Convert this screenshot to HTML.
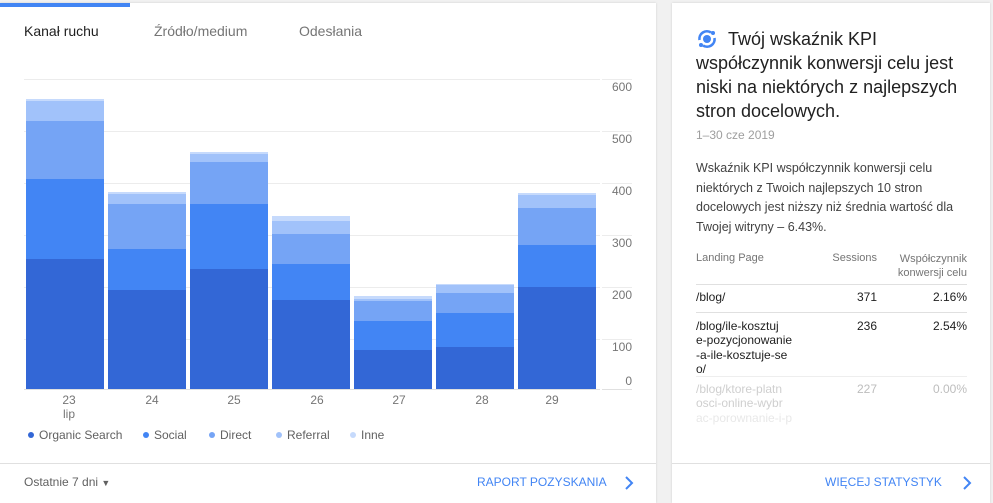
<!DOCTYPE html>
<html><head><meta charset="utf-8"><style>
*{margin:0;padding:0;box-sizing:border-box}
body{width:993px;height:503px;background:#f1f1f1;font-family:"Liberation Sans",sans-serif;position:relative;overflow:hidden}
.card{position:absolute;background:#fff;box-shadow:0 0 2px rgba(0,0,0,.15)}
.a{position:absolute;white-space:nowrap}
.bar{position:absolute;width:78px}
.g{position:absolute;height:1px;background:#ececec}
.yl{position:absolute;left:602px;width:30px;text-align:right;font-size:12px;color:#757575}
.xl{position:absolute;width:40px;text-align:center;font-size:12px;color:#757575;top:393px;line-height:14px}
.lg{position:absolute;top:428px;font-size:12px;color:#616161}
.lg i{display:inline-block;width:6px;height:6px;border-radius:50%;margin-right:5px;vertical-align:1px}
</style></head><body>
<div class="card" style="left:0;top:3px;width:656px;height:500px"></div>
<div class="a" style="left:0;top:3px;width:130px;height:4px;background:#4285f4"></div>
<div class="a" style="left:24px;top:23px;font-size:14px;color:#212121">Kanał ruchu</div>
<div class="a" style="left:154px;top:23px;font-size:14px;color:#757575">Źródło/medium</div>
<div class="a" style="left:299px;top:23px;font-size:14px;color:#757575">Odesłania</div>

<div class="g" style="left:24px;width:576px;top:79px"></div><div class="g" style="left:602px;width:30px;top:79px"></div>
<div class="g" style="left:24px;width:576px;top:131px"></div><div class="g" style="left:602px;width:30px;top:131px"></div>
<div class="g" style="left:24px;width:576px;top:183px"></div><div class="g" style="left:602px;width:30px;top:183px"></div>
<div class="g" style="left:24px;width:576px;top:235px"></div><div class="g" style="left:602px;width:30px;top:235px"></div>
<div class="g" style="left:24px;width:576px;top:287px"></div><div class="g" style="left:602px;width:30px;top:287px"></div>
<div class="g" style="left:24px;width:576px;top:339px"></div><div class="g" style="left:602px;width:30px;top:339px"></div>
<div class="g" style="left:24px;width:576px;top:389px;background:#e0e0e0"></div><div class="g" style="left:602px;width:30px;top:389px;background:#e0e0e0"></div>
<div class="yl" style="top:80px">600</div><div class="yl" style="top:132px">500</div><div class="yl" style="top:184px">400</div><div class="yl" style="top:236px">300</div><div class="yl" style="top:288px">200</div><div class="yl" style="top:340px">100</div><div class="yl" style="top:374px">0</div>

<div class="bar" style="left:26px;top:99px;height:2px;background:#c6dafc"></div><div class="bar" style="left:26px;top:101px;height:20px;background:#a1c2fa"></div><div class="bar" style="left:26px;top:121px;height:58px;background:#75a4f5"></div><div class="bar" style="left:26px;top:179px;height:80px;background:#4285f4"></div><div class="bar" style="left:26px;top:259px;height:130px;background:#3367d6"></div>
<div class="bar" style="left:108px;top:192px;height:2px;background:#c6dafc"></div><div class="bar" style="left:108px;top:194px;height:10px;background:#a1c2fa"></div><div class="bar" style="left:108px;top:204px;height:45px;background:#75a4f5"></div><div class="bar" style="left:108px;top:249px;height:41px;background:#4285f4"></div><div class="bar" style="left:108px;top:290px;height:99px;background:#3367d6"></div>
<div class="bar" style="left:190px;top:152px;height:2px;background:#c6dafc"></div><div class="bar" style="left:190px;top:154px;height:8px;background:#a1c2fa"></div><div class="bar" style="left:190px;top:162px;height:42px;background:#75a4f5"></div><div class="bar" style="left:190px;top:204px;height:65px;background:#4285f4"></div><div class="bar" style="left:190px;top:269px;height:120px;background:#3367d6"></div>
<div class="bar" style="left:272px;top:216px;height:5px;background:#c6dafc"></div><div class="bar" style="left:272px;top:221px;height:13px;background:#a1c2fa"></div><div class="bar" style="left:272px;top:234px;height:30px;background:#75a4f5"></div><div class="bar" style="left:272px;top:264px;height:36px;background:#4285f4"></div><div class="bar" style="left:272px;top:300px;height:89px;background:#3367d6"></div>
<div class="bar" style="left:354px;top:296px;height:3px;background:#c6dafc"></div><div class="bar" style="left:354px;top:299px;height:2px;background:#a1c2fa"></div><div class="bar" style="left:354px;top:301px;height:20px;background:#75a4f5"></div><div class="bar" style="left:354px;top:321px;height:29px;background:#4285f4"></div><div class="bar" style="left:354px;top:350px;height:39px;background:#3367d6"></div>
<div class="bar" style="left:436px;top:284px;height:1px;background:#c6dafc"></div><div class="bar" style="left:436px;top:285px;height:8px;background:#a1c2fa"></div><div class="bar" style="left:436px;top:293px;height:20px;background:#75a4f5"></div><div class="bar" style="left:436px;top:313px;height:34px;background:#4285f4"></div><div class="bar" style="left:436px;top:347px;height:42px;background:#3367d6"></div>
<div class="bar" style="left:518px;top:193px;height:2px;background:#c6dafc"></div><div class="bar" style="left:518px;top:195px;height:13px;background:#a1c2fa"></div><div class="bar" style="left:518px;top:208px;height:37px;background:#75a4f5"></div><div class="bar" style="left:518px;top:245px;height:42px;background:#4285f4"></div><div class="bar" style="left:518px;top:287px;height:102px;background:#3367d6"></div>

<div class="xl" style="left:49px">23<br>lip</div><div class="xl" style="left:132px">24</div><div class="xl" style="left:214px">25</div><div class="xl" style="left:297px">26</div><div class="xl" style="left:379px">27</div><div class="xl" style="left:462px">28</div><div class="xl" style="left:532px">29</div>

<div class="lg" style="left:28px"><i style="background:#3367d6"></i>Organic Search</div>
<div class="lg" style="left:143px"><i style="background:#4285f4"></i>Social</div>
<div class="lg" style="left:209px"><i style="background:#75a4f5"></i>Direct</div>
<div class="lg" style="left:276px"><i style="background:#a1c2fa"></i>Referral</div>
<div class="lg" style="left:350px"><i style="background:#c6dafc"></i>Inne</div>

<div class="a" style="left:0;top:463px;width:656px;height:1px;background:#e0e0e0"></div>
<div class="a" style="left:24px;top:475px;font-size:12px;color:#616161">Ostatnie 7 dni <span style="font-size:9px">▼</span></div>
<div class="a" style="left:477px;top:475px;font-size:12px;color:#4285f4">RAPORT POZYSKANIA</div>
<svg class="a" style="left:624px;top:476px" width="10" height="14"><path d="M2 1l6 6-6 6" stroke="#4285f4" stroke-width="2" fill="none"/></svg>

<div class="card" style="left:672px;top:3px;width:318px;height:500px"></div>
<svg class="a" style="left:696px;top:28px" width="22" height="22" viewBox="0 0 22 22"><circle cx="11" cy="11" r="4" fill="#4285f4"/><path d="M3.5 12A7.5 7.5 0 0 1 15 4.5M18.5 10A7.5 7.5 0 0 1 7 17.5" stroke="#4285f4" stroke-width="2.6" fill="none"/><circle cx="17" cy="5" r="2" fill="#4285f4"/><circle cx="5" cy="17" r="2" fill="#4285f4"/></svg>
<div class="a" style="left:696px;top:27px;font-size:18px;line-height:24px;color:#212121;white-space:normal;width:280px"><span style="padding-left:32px"></span>Twój wskaźnik KPI współczynnik konwersji celu jest niski na niektórych z najlepszych stron docelowych.</div>
<div class="a" style="left:696px;top:128px;font-size:12px;color:#9e9e9e">1–30 cze 2019</div>
<div class="a" style="left:696px;top:159px;font-size:12.5px;line-height:19.5px;color:#424242;white-space:normal;width:280px">Wskaźnik KPI współczynnik konwersji celu niektórych z Twoich najlepszych 10 stron docelowych jest niższy niż średnia wartość dla Twojej witryny – 6.43%.</div>
<div class="a" style="left:696px;top:252px;font-size:11px;color:#757575">Landing Page</div>
<div class="a" style="left:817px;top:252px;width:60px;text-align:right;font-size:11px;color:#757575">Sessions</div>
<div class="a" style="left:877px;top:252px;width:90px;text-align:right;font-size:11px;line-height:14px;color:#757575">Współczynnik<br>konwersji celu</div>
<div class="a" style="left:696px;top:284px;width:271px;height:1px;background:#e0e0e0"></div>
<div class="a" style="left:696px;top:290px;font-size:12px;color:#212121">/blog/</div>
<div class="a" style="left:817px;top:290px;width:60px;text-align:right;font-size:12px;color:#212121">371</div>
<div class="a" style="left:877px;top:290px;width:90px;text-align:right;font-size:12px;color:#212121">2.16%</div>
<div class="a" style="left:696px;top:312px;width:271px;height:1px;background:#e0e0e0"></div>
<div class="a" style="left:696px;top:319px;font-size:12px;line-height:14.3px;color:#212121">/blog/ile-kosztuj<br>e-pozycjonowanie<br>-a-ile-kosztuje-se<br>o/</div>
<div class="a" style="left:817px;top:319px;width:60px;text-align:right;font-size:12px;color:#212121">236</div>
<div class="a" style="left:877px;top:319px;width:90px;text-align:right;font-size:12px;color:#212121">2.54%</div>
<div class="a" style="left:696px;top:376px;width:271px;height:1px;background:#eee"></div>
<div class="a" style="left:696px;top:382px;font-size:12px;line-height:14.3px;color:#cfcfcf">/blog/ktore-platn<br>osci-online-wybr<br><span style="color:#e8e8e8">ac-porownanie-i-p</span></div>
<div class="a" style="left:817px;top:382px;width:60px;text-align:right;font-size:12px;color:#bdbdbd">227</div>
<div class="a" style="left:877px;top:382px;width:90px;text-align:right;font-size:12px;color:#bdbdbd">0.00%</div>
<div class="a" style="left:672px;top:463px;width:318px;height:1px;background:#e0e0e0"></div>
<div class="a" style="left:825px;top:475px;font-size:12px;color:#4285f4">WIĘCEJ STATYSTYK</div>
<svg class="a" style="left:962px;top:476px" width="10" height="14"><path d="M2 1l6 6-6 6" stroke="#4285f4" stroke-width="2" fill="none"/></svg>
</body></html>
